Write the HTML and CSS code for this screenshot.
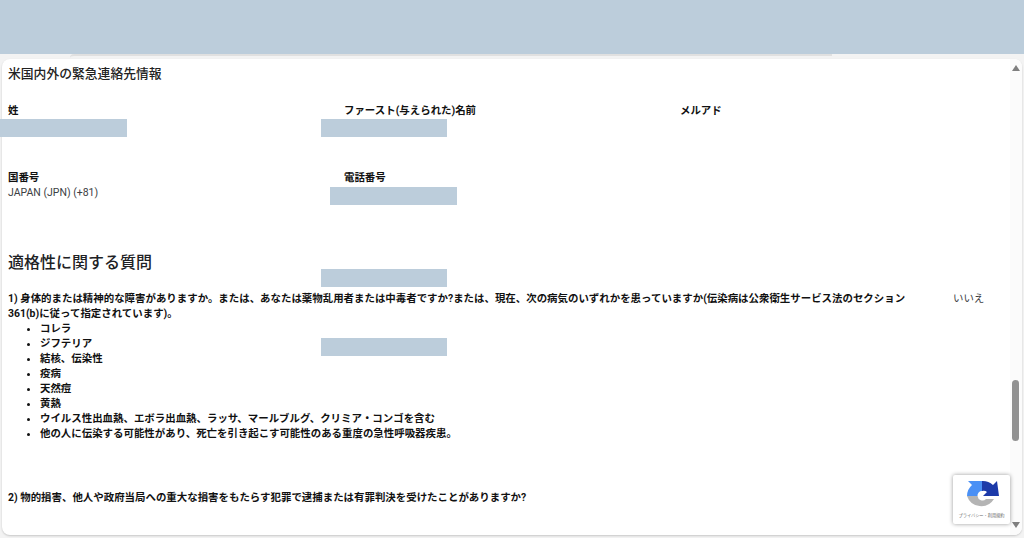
FILE: index.html
```html
<!DOCTYPE html>
<html lang="ja">
<head>
<meta charset="utf-8">
<title>緊急連絡先情報</title>
<link rel="stylesheet" href="styles.css">
</head>
<body>
<div class="top-band"></div>
<div class="top-rule"></div>
<main class="card">
  <div class="content">
    <h2 class="section-title">米国内外の緊急連絡先情報</h2>
    <div class="fields fields-first">
      <div class="field"><div class="label">姓</div></div>
      <div class="field"><div class="label">ファースト(与えられた)名前</div></div>
      <div class="field"><div class="label">メルアド</div></div>
    </div>
    <div class="fields fields-second">
      <div class="field"><div class="label">国番号</div><div class="value">JAPAN (JPN) (+81)</div></div>
      <div class="field"><div class="label">電話番号</div></div>
    </div>
    <h1 class="heading">適格性に関する質問</h1>
    <div class="question">
      <div class="q-body">
        <div class="q-text">1) 身体的または精神的な障害がありますか。または、あなたは薬物乱用者または中毒者ですか?または、現在、次の病気のいずれかを患っていますか(伝染病は公衆衛生サービス法のセクション361(b)に従って指定されています)。</div>
        <ul class="q-list">
          <li>コレラ</li>
          <li>ジフテリア</li>
          <li>結核、伝染性</li>
          <li>疫病</li>
          <li>天然痘</li>
          <li>黄熱</li>
          <li>ウイルス性出血熱、エボラ出血熱、ラッサ、マールブルグ、クリミア・コンゴを含む</li>
          <li>他の人に伝染する可能性があり、死亡を引き起こす可能性のある重度の急性呼吸器疾患。</li>
        </ul>
      </div>
      <div class="answer">いいえ</div>
    </div>
    <div class="question question-second">
      <div class="q-body"><div class="q-text">2) 物的損害、他人や政府当局への重大な損害をもたらす犯罪で逮捕または有罪判決を受けたことがありますか?</div></div>
    </div>
  </div>
  <div class="scrollbar">
    <svg class="arrow" width="8" height="6" viewBox="0 0 8 6"><path d="M4 0 L8 6 L0 6 Z"/></svg>
    <div class="track"><div class="thumb"></div></div>
    <svg class="arrow" width="8" height="6" viewBox="0 0 8 6"><path d="M0 0 L8 0 L4 6 Z"/></svg>
  </div>
  <div class="redact r-last"></div>
  <div class="redact r-first"></div>
  <div class="redact r-phone"></div>
  <div class="redact r-mid1"></div>
  <div class="redact r-mid2"></div>
  <div class="recaptcha">
    <svg class="recaptcha-logo" width="34" height="32" viewBox="0 0 34 32">
      <path fill="#4a90f5" d="M1 16 A15 15 0 0 1 6 5 L2 1 L16 1 L16 11 A4.5 4.5 0 0 0 11.5 16 Z"/>
      <path fill="#1c3aa9" d="M16 1 A15 15 0 0 1 27 5 L31 1 L33 16 L17 16 L21 12 A5 5 0 0 0 16 11 Z"/>
      <path fill="#b4b4b4" d="M1 16 L11.5 16 A5 5 0 0 0 20 19 L28 19 A15 15 0 0 1 1 16 Z"/>
    </svg>
    <div class="recaptcha-text">プライバシー・利用規約</div>
  </div>
</main>
</body>
</html>
```
FILE: styles.css
```css
* { box-sizing: border-box; }
html, body { height: 100%; }
body {
  margin: 0;
  height: 538px;
  overflow: hidden;
  display: flex;
  flex-direction: column;
  background: #f3f3f3;
  font-family: Roboto, "Noto Sans CJK JP", sans-serif;
  color: #202124;
}
.top-band { height: 54px; flex: none; background: #bccddb; }
.top-rule {
  height: 5px;
  flex: none;
  margin: 0 192px 0 70px;
  border-top: 2px solid #e0e0e0;
  border-radius: 4px 0 0 0;
}
.card {
  position: relative;
  flex: 1;
  display: flex;
  margin: 0 2px 3px 2px;
  min-height: 0;
  background: #fff;
  border-radius: 8px;
  box-shadow: 0 1px 2px rgba(0, 0, 0, .18);
}
.content { flex: 1; min-width: 0; padding: 6px 0 0 6px; overflow: hidden; }
.section-title {
  margin: 0;
  font-size: 12.8px;
  line-height: 18px;
  font-weight: 500;
  color: #222;
}
.fields { display: grid; grid-template-columns: 336px 336px 336px; }
.fields-first { margin-top: 20px; height: 67px; }
.fields-second { height: 81px; }
.label { font-size: 10.44px; line-height: 15px; font-weight: 700; color: #111; }
.value { font-size: 10.5px; line-height: 15px; color: #3c4043; }
.heading {
  margin: 0;
  font-size: 16px;
  line-height: 24px;
  font-weight: 500;
  color: #202124;
}
.question { display: flex; font-size: 10.44px; line-height: 15px; color: #111; }
.heading + .question { margin-top: 16px; }
.q-body { width: 902px; font-weight: 700; }
.answer { margin-left: 43px; font-weight: 400; color: #3c4043; white-space: nowrap; }
.q-list { margin: 0; padding: 0 0 0 32px; }
.question-second { margin-top: 49px; }
.scrollbar {
  flex: none;
  width: 12px;
  display: flex;
  flex-direction: column;
  align-items: center;
  padding: 6px 0 7px;
  background: #fbfbfb;
  border-radius: 0 8px 8px 0;
}
.arrow { flex: none; fill: #7f7f7f; }
.track { flex: 1; width: 100%; padding: 309px 3px 0 2px; }
.thumb { height: 61px; border-radius: 4px; background: #919191; }
.redact { position: absolute; background: #bccddb; height: 18px; width: 126px; }
.r-last { left: -2px; top: 60px; width: 127px; }
.r-first { left: 319px; top: 60px; }
.r-phone { left: 328px; top: 128px; width: 127px; }
.r-mid1 { left: 319px; top: 210px; }
.r-mid2 { left: 319px; top: 279px; }
.recaptcha {
  position: absolute;
  left: 951px;
  top: 416px;
  width: 57px;
  height: 49px;
  background: #fff;
  box-shadow: 0 0 4px rgba(0, 0, 0, .4);
  border-radius: 2px;
  display: flex;
  flex-direction: column;
  align-items: center;
  padding-top: 5px;
}
.recaptcha-logo { flex: none; margin-left: 2px; }
.recaptcha-text { font-size: 4.2px; line-height: 6px; color: #666; white-space: nowrap; margin-top: 1px; }
```
